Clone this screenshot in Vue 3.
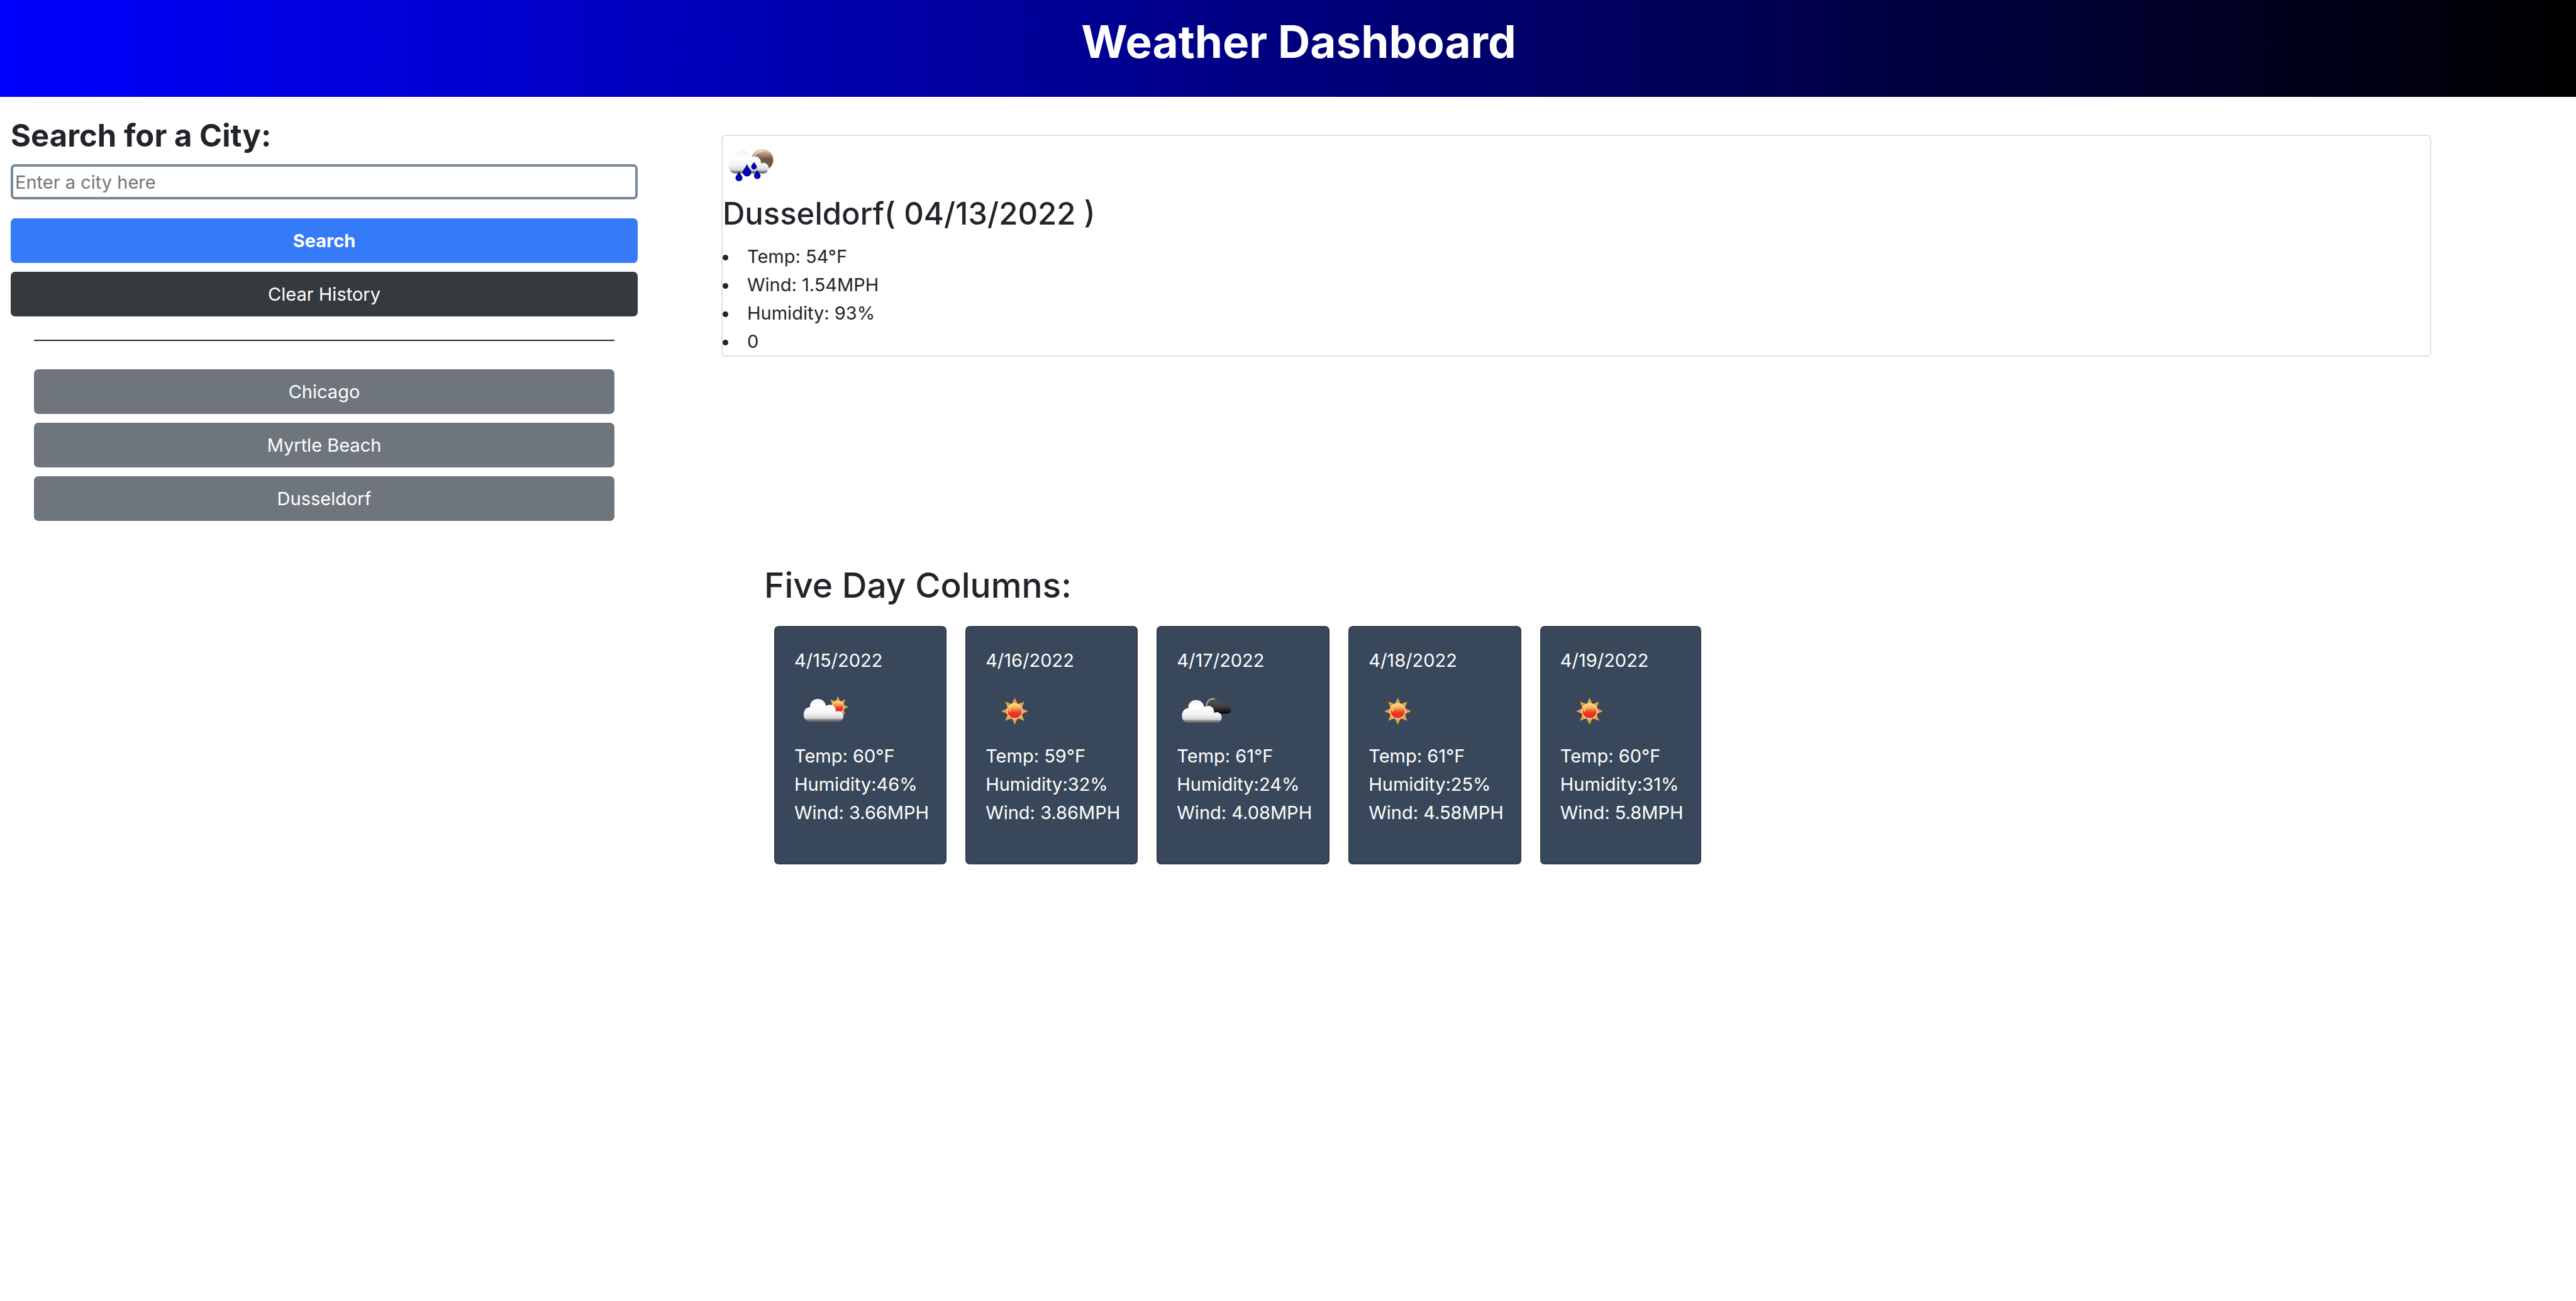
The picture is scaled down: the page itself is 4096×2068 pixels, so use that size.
<script setup>
import { ref } from 'vue'

const city = ref('')
const history = ['Chicago', 'Myrtle Beach', 'Dusseldorf']

const current = ['Temp: 54°F', 'Wind: 1.54MPH', 'Humidity: 93%', '0']

const days = [
  { date: '4/15/2022', icon: 'few-clouds', temp: 60, humidity: 46, wind: 3.66 },
  { date: '4/16/2022', icon: 'sun', temp: 59, humidity: 32, wind: 3.86 },
  { date: '4/17/2022', icon: 'clouds', temp: 61, humidity: 24, wind: 4.08 },
  { date: '4/18/2022', icon: 'sun', temp: 61, humidity: 25, wind: 4.58 },
  { date: '4/19/2022', icon: 'sun', temp: 60, humidity: 31, wind: 5.8 }
]

const rays = [0, 45, 90, 135, 180, 225, 270, 315]
</script>

<template>
  <div class="page">
    <header class="banner">
      <h1>Weather Dashboard</h1>
    </header>

    <div class="layout">
      <aside class="sidebar">
        <form class="search" @submit.prevent>
          <label class="search-title" for="city">Search for a City:</label>
          <input id="city" v-model="city" type="text" placeholder="Enter a city here" />
          <button class="btn primary" type="submit">Search</button>
          <button class="btn dark" type="button">Clear History</button>
        </form>
        <div class="history">
          <hr />
          <button v-for="name in history" :key="name" class="btn secondary" type="button">{{ name }}</button>
        </div>
      </aside>

      <main class="content">
        <section class="current">
          <svg class="icon" viewBox="0 0 100 100" aria-hidden="true"><use href="#rain" /></svg>
          <h2>Dusseldorf( 04/13/2022 )</h2>
          <ul>
            <li v-for="line in current" :key="line">{{ line }}</li>
          </ul>
        </section>

        <section class="forecast">
          <h2>Five Day Columns:</h2>
          <div class="cards">
            <article v-for="day in days" :key="day.date" class="card">
              <p class="date">{{ day.date }}</p>
              <svg class="icon" viewBox="0 0 100 100" aria-hidden="true"><use :href="'#' + day.icon" /></svg>
              <p>Temp: {{ day.temp }}°F</p>
              <p>Humidity:{{ day.humidity }}%</p>
              <p>Wind: {{ day.wind }}MPH</p>
            </article>
          </div>
        </section>
      </main>
    </div>

    <svg class="sprite" width="0" height="0" aria-hidden="true">
      <defs>
        <linearGradient id="g-cloud" x1="0" y1="0" x2="0" y2="1">
          <stop offset="0" stop-color="#f0f0f0" />
          <stop offset="0.3" stop-color="#ffffff" />
          <stop offset="0.65" stop-color="#f2f2f2" />
          <stop offset="0.85" stop-color="#d2d2d2" />
          <stop offset="0.9" stop-color="#8c8c8c" />
          <stop offset="1" stop-color="#5a5a5a" />
        </linearGradient>
        <linearGradient id="g-dark" x1="0" y1="0" x2="0" y2="1">
          <stop offset="0" stop-color="#5a5a5a" />
          <stop offset="0.6" stop-color="#3c3c3c" />
          <stop offset="1" stop-color="#000000" />
        </linearGradient>
        <linearGradient id="g-moon" x1="0" y1="0" x2="0" y2="1">
          <stop offset="0" stop-color="#f3ddce" />
          <stop offset="0.2" stop-color="#b59a86" />
          <stop offset="0.45" stop-color="#6f5744" />
          <stop offset="1" stop-color="#6b5540" />
        </linearGradient>
        <linearGradient id="g-sun" x1="0" y1="0" x2="0" y2="1">
          <stop offset="0" stop-color="#f9dc7c" />
          <stop offset="0.25" stop-color="#f4b55a" />
          <stop offset="0.5" stop-color="#ec5a2b" />
          <stop offset="0.65" stop-color="#ea3323" />
          <stop offset="1" stop-color="#ea3323" />
        </linearGradient>
        <radialGradient id="g-drop" cx="0.5" cy="0.65" r="0.6">
          <stop offset="0" stop-color="#0000d8" />
          <stop offset="0.5" stop-color="#0000b4" />
          <stop offset="1" stop-color="#00005a" />
        </radialGradient>
      </defs>

      <symbol id="sun" viewBox="0 0 100 100">
        <path
          v-for="angle in rays"
          :key="angle"
          d="M50 27 L44 40 L56 40 Z"
          fill="#e9a03b"
          :transform="`rotate(${angle} 50 50)`"
        />
        <circle cx="50" cy="50" r="13" fill="url(#g-sun)" stroke="#f8dcc0" stroke-width="1.6" />
        <path d="M41 50 C41 44 45 41 50 40" fill="none" stroke="#f6cf55" stroke-width="2" stroke-linecap="round" />
      </symbol>

      <symbol id="few-clouds" viewBox="0 0 100 100">
        <g transform="translate(74.5 42.8) scale(0.79) translate(-50 -50)">
          <path
            v-for="angle in rays"
            :key="angle"
            d="M50 27 L44 40 L56 40 Z"
            fill="#e9a03b"
            :transform="`rotate(${angle} 50 50)`"
          />
          <circle cx="50" cy="50" r="13" fill="url(#g-sun)" stroke="#f8dcc0" stroke-width="1.6" />
        </g>
        <path
          d="M27 68 C19 68 16 61 16 56 C16 49 20 43 27 43 C26 35 32 29 40 29 C48 29 53 34 54 41 C58 38 66 38 69 43 C71 46 71 49 71 51 C78 47 84 53 84 58 C84 63 81 68 76 68 Z"
          fill="url(#g-cloud)"
        />
      </symbol>

      <symbol id="clouds" viewBox="0 0 100 100">
        <path
          d="M60 54 L50 41 C50 32 55 27 61 27 C66 27 70 30 71 34 C76 32 81 36 81 41 C88 40 93 44 93 48 C93 52 90 54 86 54 Z"
          fill="url(#g-dark)"
        />
        <path d="M51 40 C52 32 57 28 64 29" fill="none" stroke="#b4b4b4" stroke-width="2" stroke-linecap="round" />
        <path
          transform="translate(-7 2)"
          d="M27 68 C19 68 16 61 16 56 C16 49 20 43 27 43 C26 35 32 29 40 29 C48 29 53 34 54 41 C58 38 66 38 69 43 C71 46 71 49 71 51 C78 47 84 53 84 58 C84 63 81 68 76 68 Z"
          fill="url(#g-cloud)"
        />
      </symbol>

      <symbol id="rain" viewBox="0 0 100 100">
        <circle cx="68" cy="41" r="18.5" fill="url(#g-moon)" />
        <path d="M52 38 C55 29 62 26 69 26" fill="none" stroke="#f3e6dc" stroke-width="1.6" stroke-linecap="round" />
        <path
          transform="translate(-5.5 -3.5)"
          d="M27 68 C19 68 16 61 16 56 C16 49 20 43 27 43 C26 35 32 29 40 29 C48 29 53 34 54 41 C58 38 66 38 69 43 C71 46 71 49 71 51 C78 47 84 53 84 58 C84 63 81 68 76 68 Z"
          fill="url(#g-cloud)"
          stroke="#f4f4f4"
          stroke-width="0.6"
        />
        <g fill="url(#g-drop)">
          <path d="M28 61 C30 66 34 68 34 71.500 A6 6 0 0 1 22 71.500 C22 68 26 66 28 61 Z" />
          <path d="M41.700 48 C44 55 49 58 49 62 A7.300 7.300 0 0 1 34.400 62 C34.400 58 39 55 41.700 48 Z" />
          <path d="M53.700 44 C55 48 58.500 50 58.500 52.500 A4.800 4.800 0 0 1 48.900 52.500 C48.900 50 52 48 53.700 44 Z" />
          <path d="M59.300 58 C61 63 65 65 65 68 A5.700 5.700 0 0 1 53.600 68 C53.600 65 57 63 59.300 58 Z" />
        </g>
      </symbol>
    </svg>
  </div>
</template>

<style>
body {
  margin: 0;
  background: #fff;
}
</style>

<style scoped>
.page {
  color: #212529;
  font-family: Inter, "Liberation Sans", sans-serif;
  font-size: 29px;
  line-height: 45px;
}

h1,
h2,
p,
ul {
  margin: 0;
  padding: 0;
}

.banner {
  padding: 22px 0 43px 34px;
  background: linear-gradient(to right, #0000ff, #000000);
  color: #fff;
  text-align: center;
}

.banner h1 {
  font-size: 71px;
  font-weight: 700;
  line-height: 89px;
}

.layout {
  display: flex;
  align-items: flex-start;
}

.sidebar {
  box-sizing: border-box;
  flex: 0 0 25%;
  padding: 31px 10px 0 17px;
}

.search {
  display: flex;
  flex-direction: column;
}

.search-title {
  margin-bottom: 14px;
  font-size: 49px;
  font-weight: 700;
  line-height: 62px;
}

.search input {
  box-sizing: border-box;
  height: 56px;
  margin: 0 0 30px;
  padding: 0 3px;
  border: 4px solid #778899;
  border-radius: 7px;
  background: #fff;
  color: #212529;
  font: inherit;
}

.search input::placeholder {
  color: #757575;
  opacity: 1;
}

.btn {
  box-sizing: border-box;
  width: 100%;
  height: 71px;
  padding: 0 22px;
  border: 0;
  border-radius: 7px;
  color: #fff;
  font: inherit;
  text-align: center;
}

.primary {
  margin-bottom: 14px;
  background: #357af6;
  font-weight: 700;
}

.dark {
  background: #353a3e;
}

.secondary {
  background: #6e757c;
}

.history {
  display: flex;
  flex-direction: column;
  gap: 14px;
  padding: 37px 37px 0;
}

.history hr {
  width: 100%;
  height: 2px;
  margin: 0 0 31px;
  border: 0;
  background: #212529;
}

.content {
  flex: 1;
  min-width: 0;
  padding: 60px 230px 0 123px;
}

.current {
  border: 2px solid #dee2e6;
  border-radius: 7px;
}

.icon {
  display: block;
  width: 93px;
  height: 93px;
}

.current h2 {
  margin-bottom: 14px;
  font-size: 49px;
  font-weight: 500;
  line-height: 62px;
}

.current ul {
  list-style: none;
}

.current li {
  display: flex;
  align-items: center;
  gap: 30px;
}

.current li::before {
  width: 9px;
  height: 9px;
  margin-top: 4px;
  border-radius: 50%;
  background: #212529;
  content: "";
}

.forecast {
  padding: 327px 0 0 68px;
}

.forecast h2 {
  font-size: 55px;
  font-weight: 500;
  line-height: 72px;
}

.cards {
  display: flex;
  flex-wrap: wrap;
  gap: 30px;
  padding: 29px 16px;
}

.card {
  padding: 30px 26px 58px 30px;
  border: 2px solid #313e4e;
  border-radius: 7px;
  background: #384759;
  color: #fff;
}

.card .date {
  margin-bottom: 12px;
}

.card .icon {
  margin-bottom: 2px;
}

.sprite {
  position: absolute;
}
</style>
